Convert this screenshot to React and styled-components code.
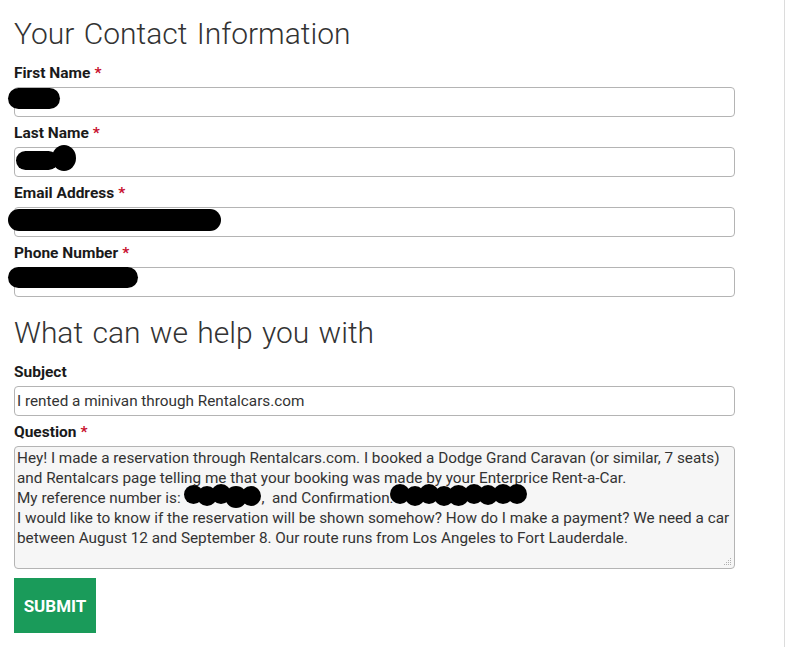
import React from "react";
import styled, { createGlobalStyle } from "styled-components";

const Global = createGlobalStyle`
  html, body { margin: 0; padding: 0; background: #fff; }
  body { font-family: Roboto, "Liberation Sans", sans-serif; color: #222; }
`;

const Page = styled.div`
  display: flex;
  min-height: 647px;
`;

const Main = styled.main`
  width: 785px;
  box-sizing: border-box;
  border-right: 1px solid #dcdcdc;
  padding: 16px 0 0 14px;
`;

const Form = styled.form`
  width: 721px;
  display: flex;
  flex-direction: column;
`;

const Heading = styled.h2`
  margin: ${(p) => (p.$first ? "0" : "13px")} 0 10px;
  font-size: 30px;
  line-height: 36px;
  font-weight: 300;
  color: #333;
  word-spacing: 2px;
`;

const Field = styled.div`
  display: flex;
  flex-direction: column;
  gap: 3px;
  margin-bottom: ${(p) => p.$mb || "5px"};
`;

const Label = styled.label`
  font-size: 15.5px;
  line-height: 22px;
  font-weight: 700;
  color: #1a1a1a;
`;

const Req = styled.span`
  color: #c8102e;
  margin-left: 4px;
`;

const Control = styled.div`
  position: relative;
  height: 30px;
  box-sizing: border-box;
  border: 1px solid #b4b4b4;
  border-radius: 4px;
  background: #fff;
  padding: 0 2px;
  font-size: 15.3px;
  line-height: 28px;
  color: #333;
`;

const Area = styled.div`
  position: relative;
  height: 123px;
  box-sizing: border-box;
  border: 1px solid #b4b4b4;
  border-radius: 4px;
  background: #f6f6f6;
  padding: 1px 2px;
  font-size: 15.3px;
  line-height: 20px;
  color: #333;
  white-space: pre-wrap;
`;

const Scribble = styled.span`
  position: absolute;
  background: #000;
  border-radius: ${(p) => p.$r || "12px"};
`;

const Blot = styled.span`
  display: inline-flex;
  align-items: center;
  vertical-align: -1px;
  height: 12px;
  overflow: visible;
  margin: ${(p) => p.$m || "0"};
`;

const Dot = styled.span`
  display: inline-block;
  flex: none;
  width: ${(p) => p.$s}px;
  height: ${(p) => p.$s}px;
  border-radius: 50%;
  background: #000;
  margin-left: ${(p) => p.$o || -6}px;
  transform: translateY(${(p) => p.$y || 0}px);
  &:first-child { margin-left: 0; }
`;

const Grip = styled.svg`
  position: absolute;
  right: 2px;
  bottom: 2px;
`;

const Submit = styled.button`
  margin-top: 9px;
  align-self: flex-start;
  width: 82px;
  height: 55px;
  border: none;
  background: #1a9b5a;
  color: #fff;
  font-family: inherit;
  font-size: 17px;
  font-weight: 700;
  padding: 0;
`;

const blot1 = [
  [19, 0], [20, 1], [20, -1], [22, 2], [20, 1],
];
const blot2 = [
  [20, 0], [20, 2], [20, 0], [20, 2], [21, 1], [20, 0], [20, 1], [20, 0], [20, 0],
];

export default function App() {
  return (
    <>
      <Global />
      <Page>
        <Main>
          <Form onSubmit={(e) => e.preventDefault()}>
            <Heading $first>Your Contact Information</Heading>
            <Field>
              <Label>First Name<Req>*</Req></Label>
              <Control>
                <Scribble style={{ left: -7, top: 0, width: 52, height: 21 }} />
              </Control>
            </Field>
            <Field>
              <Label>Last Name<Req>*</Req></Label>
              <Control>
                <Scribble style={{ left: 1, top: 3, width: 42, height: 19 }} />
                <Scribble $r="50%" style={{ left: 37, top: -3, width: 24, height: 26 }} />
              </Control>
            </Field>
            <Field>
              <Label>Email Address<Req>*</Req></Label>
              <Control>
                <Scribble style={{ left: -7, top: 1, width: 213, height: 22 }} />
              </Control>
            </Field>
            <Field>
              <Label>Phone Number<Req>*</Req></Label>
              <Control>
                <Scribble style={{ left: -7, top: -1, width: 130, height: 21 }} />
              </Control>
            </Field>

            <Heading>What can we help you with</Heading>
            <Field>
              <Label>Subject</Label>
              <Control>I rented a minivan through Rentalcars.com</Control>
            </Field>
            <Field $mb="0">
              <Label>Question<Req>*</Req></Label>
              <Area>
                {"Hey! I made a reservation through Rentalcars.com. I booked a Dodge Grand Caravan (or similar, 7 seats)\nand Rentalcars page telling me that your booking was made by your Enterprice Rent-a-Car.\nMy reference number is: "}
                <Blot>
                  {blot1.map(([s, y], i) => (
                    <Dot key={i} $s={s} $y={y} $o={-6} />
                  ))}
                </Blot>
                {",  and Confirmation:"}
                <Blot $m="0 0 0 -3px">
                  {blot2.map(([s, y], i) => (
                    <Dot key={i} $s={s} $y={y} $o={-5.5} />
                  ))}
                </Blot>
                {"\nI would like to know if the reservation will be shown somehow? How do I make a payment? We need a car\nbetween August 12 and September 8. Our route runs from Los Angeles to Fort Lauderdale."}
                <Grip width="8" height="8" viewBox="0 0 8 8">
                  <g fill="#b0b0b0">
                    <rect x="6" y="0" width="1" height="1" />
                    <rect x="4" y="2" width="1" height="1" />
                    <rect x="6" y="2" width="1" height="1" />
                    <rect x="2" y="4" width="1" height="1" />
                    <rect x="4" y="4" width="1" height="1" />
                    <rect x="6" y="4" width="1" height="1" />
                    <rect x="0" y="6" width="1" height="1" />
                    <rect x="2" y="6" width="1" height="1" />
                    <rect x="4" y="6" width="1" height="1" />
                    <rect x="6" y="6" width="1" height="1" />
                  </g>
                </Grip>
              </Area>
            </Field>
            <Submit type="submit">SUBMIT</Submit>
          </Form>
        </Main>
      </Page>
    </>
  );
}
